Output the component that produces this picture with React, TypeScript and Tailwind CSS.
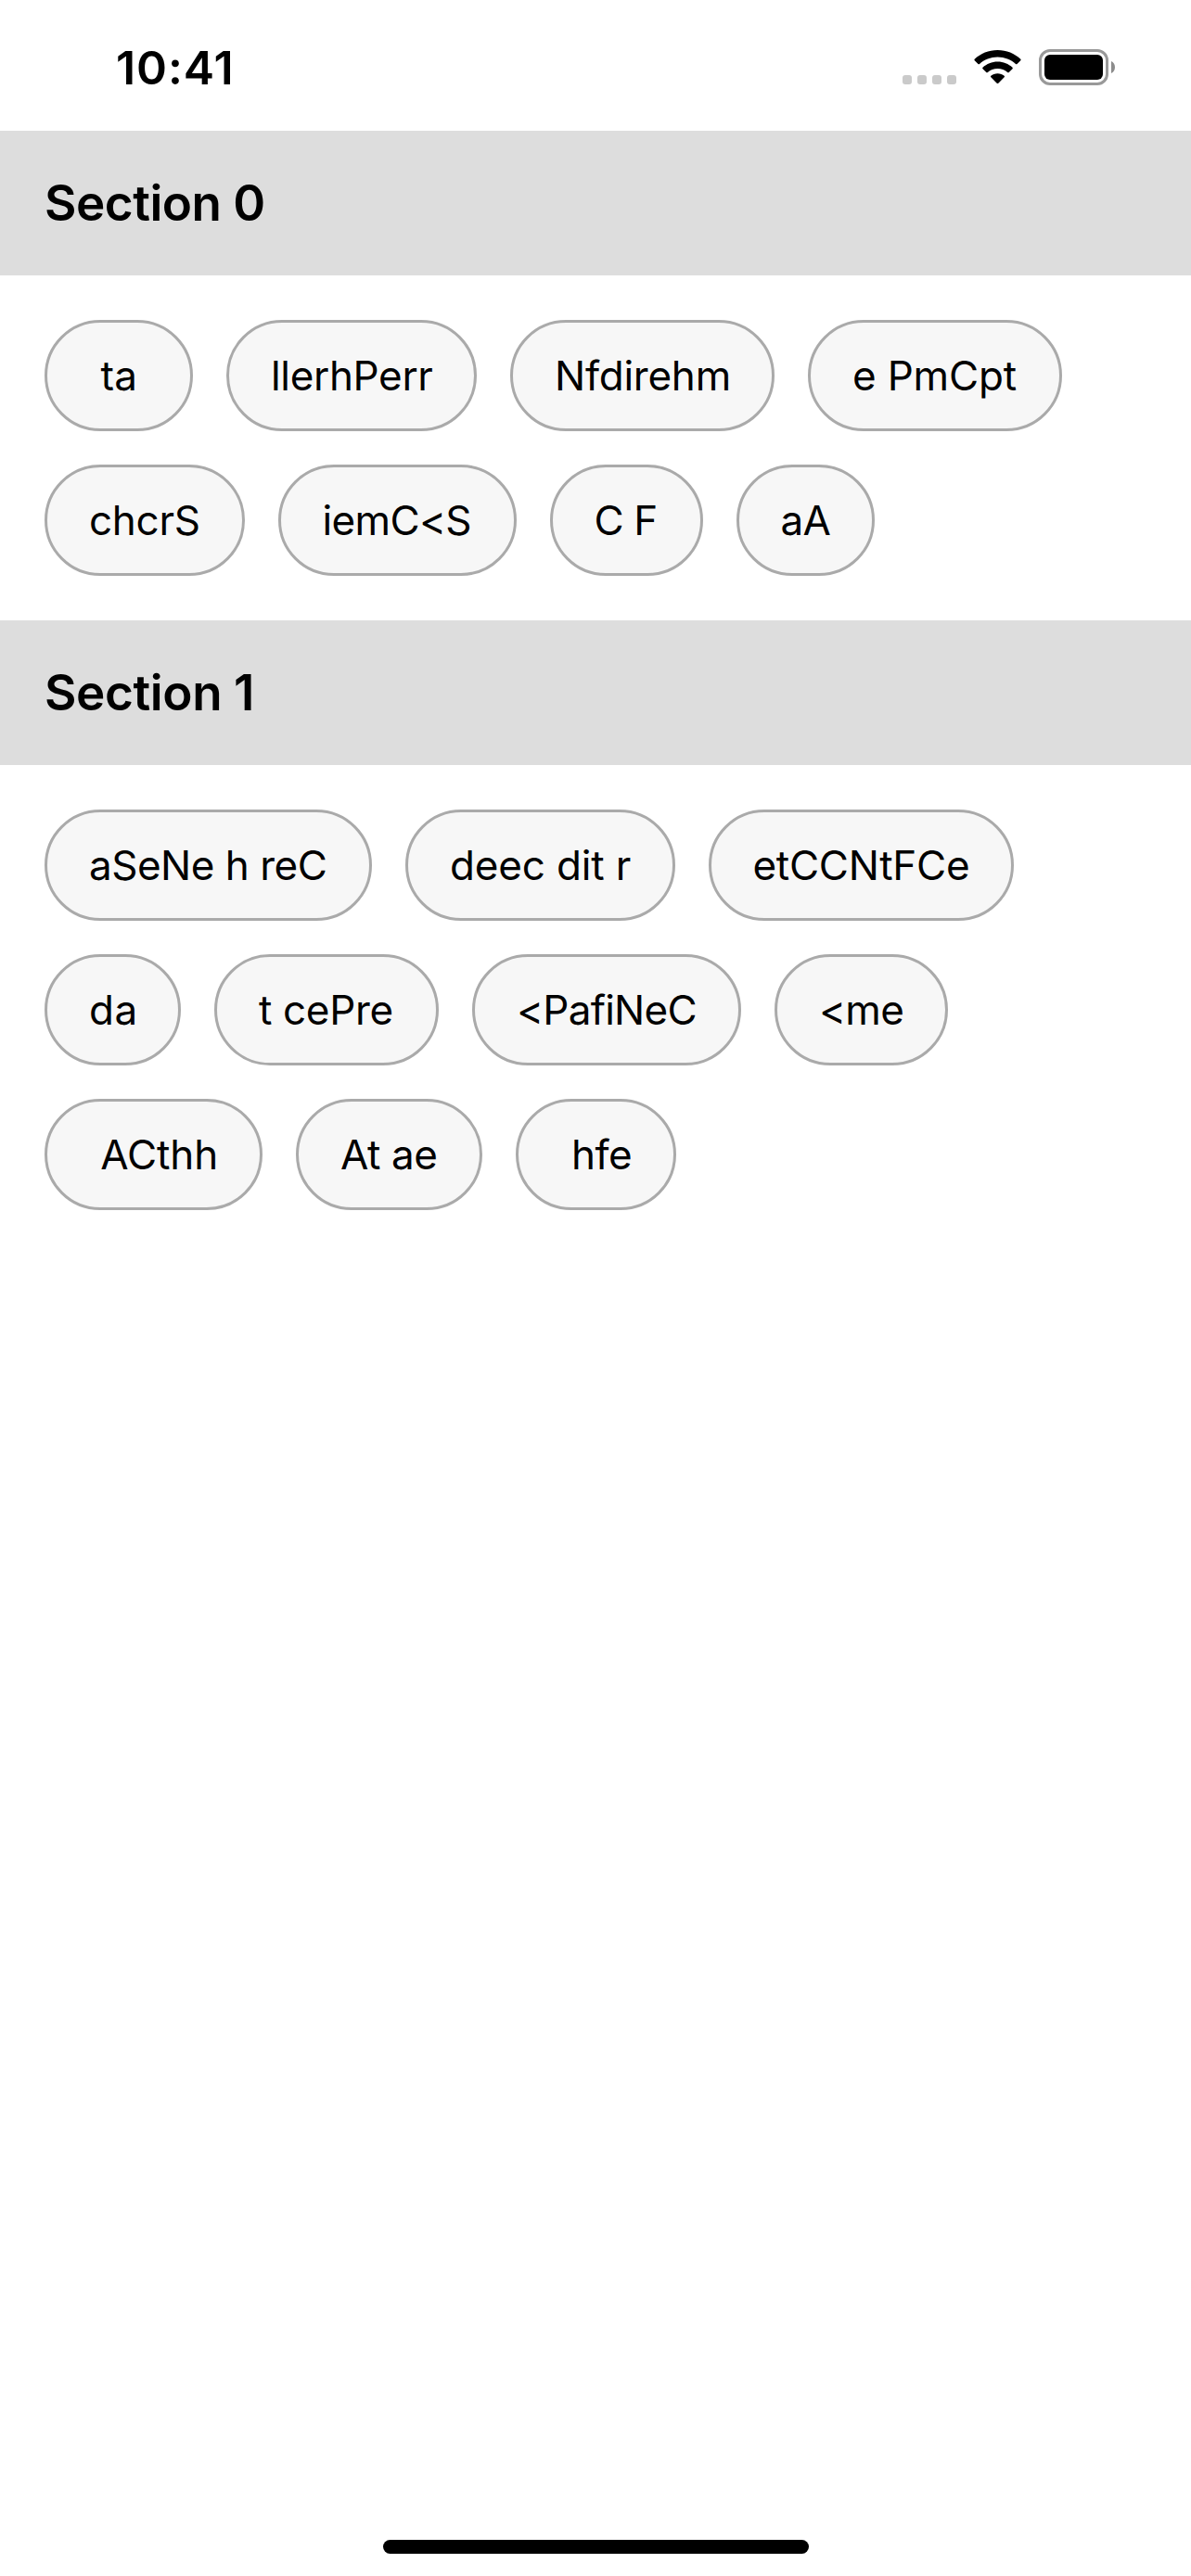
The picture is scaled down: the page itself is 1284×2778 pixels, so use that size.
type Chip = { label: string; box: string };

const sections: { title: string; tracking: string; rows: Chip[][] }[] = [
  {
    title: "Section 0",
    tracking: "tracking-[-0.5px]",
    rows: [
      [
        { label: " ta ", box: "w-[160px] tracking-[0.1px]" },
        { label: "llerhPerr", box: "w-[270px] tracking-[-0.33px]" },
        { label: "Nfdirehm", box: "w-[285px] tracking-[-0.23px]" },
        { label: "e PmCpt", box: "w-[274px] tracking-[-0.17px]" },
      ],
      [
        { label: "chcrS", box: "w-[215.5px] tracking-[-0.3px]" },
        { label: "iemC<S", box: "w-[257px] tracking-[-0.65px]" },
        { label: "C F", box: "w-[165px] tracking-[-0.86px]" },
        { label: "aA", box: "w-[149px] tracking-[-0.8px]" },
      ],
    ],
  },
  {
    title: "Section 1",
    tracking: "tracking-[-0.4px]",
    rows: [
      [
        { label: "aSeNe h reC", box: "w-[353px] tracking-[-0.5px]" },
        { label: "deec dit r", box: "w-[290.5px] tracking-[-0.15px]" },
        { label: "etCCNtFCe", box: "w-[329.5px] tracking-[-0.28px]" },
      ],
      [
        { label: "da", box: "w-[147px] tracking-[0.6px]" },
        { label: "t cePre", box: "w-[242px] tracking-[-0.35px]" },
        { label: "<PafiNeC", box: "w-[290px] tracking-[-0.75px]" },
        { label: "<me", box: "w-[187px] tracking-[-0.75px]" },
      ],
      [
        { label: " ACthh", box: "w-[235px] tracking-[-0.1px]" },
        { label: "At ae", box: "w-[201px] tracking-[-0.4px]" },
        { label: " hfe", box: "w-[173px] tracking-[-0.5px]" },
      ],
    ],
  },
];

function StatusBar() {
  return (
    <header className="flex h-[141px] shrink-0 items-start justify-between pr-[82px] pl-[125px]">
      <time className="mt-[43px] text-[50px] leading-[60px] font-semibold tracking-[0.9px]">10:41</time>
      <div className="mt-[53px] flex h-[39px] items-start">
        <div className="mt-7 flex gap-1.5">
          {[0, 1, 2, 3].map((dot) => (
            <span key={dot} className="size-2.5 rounded-[3px] bg-[#cacaca]" />
          ))}
        </div>
        <svg className="ml-[19px] h-[38px] w-[51px]" viewBox="0 0 51 38" fill="black">
          <path d="M25.500 1C15.900 1 7.200 4.700 .7 10.700Q0 11.500 .7 12.200L4.500 16Q5.200 16.700 6 16C11.100 11.300 18 8.500 25.500 8.500S39.900 11.300 45 16Q45.800 16.700 46.500 16L50.300 12.200Q51 11.500 50.300 10.700C43.800 4.700 35.100 1 25.500 1Z" />
          <path d="M25.500 13.500C19.300 13.500 13.700 15.900 9.500 19.700Q8.700 20.400 9.500 21.200L13.300 25Q14 25.700 14.800 25C17.600 22.500 21.400 21 25.500 21S33.400 22.500 36.200 25Q37 25.700 37.700 25L41.500 21.200Q42.300 20.400 41.500 19.700C37.300 15.900 31.700 13.500 25.500 13.500Z" />
          <path d="M25.500 26.200C22.700 26.200 20.200 27.200 18.300 28.800Q17.500 29.500 18.300 30.300L24.700 36.700Q25.500 37.500 26.300 36.700L32.700 30.300Q33.500 29.500 32.700 28.800C30.800 27.200 28.300 26.200 25.500 26.200Z" />
        </svg>
        <div className="ml-[19px] h-[39px] w-[75px] rounded-[12px] border-3 border-[#999] p-[3px]">
          <div className="h-full rounded-[6px] bg-black" />
        </div>
        <svg className="mt-[13px] ml-[3px] h-[13px] w-1" viewBox="0 0 4 13" fill="#8c8c8c">
          <path d="M0 0C2.400 1 4 3.500 4 6.500S2.400 12 0 13Z" />
        </svg>
      </div>
    </header>
  );
}

export default function App() {
  return (
    <div className="flex h-[2778px] w-[1284px] flex-col bg-white font-['Inter',sans-serif] text-black">
      <StatusBar />
      <main className="grow">
        {sections.map((section) => (
          <section key={section.title}>
            <h2
              className={`flex h-[156px] items-center bg-[#dddddd] px-12 text-[53px] leading-none font-semibold ${section.tracking}`}
            >
              {section.title}
            </h2>
            <div className="flex flex-col gap-9 p-12">
              {section.rows.map((row, i) => (
                <div key={i} className="flex gap-9">
                  {row.map((chip) => (
                    <div
                      key={chip.label}
                      className={`flex h-[120px] items-center rounded-full border-3 border-[#aaaaaa] bg-[#f7f7f7] pl-[45px] text-[44px] leading-none whitespace-pre ${chip.box}`}
                    >
                      {chip.label}
                    </div>
                  ))}
                </div>
              ))}
            </div>
          </section>
        ))}
      </main>
      <div className="mb-6 h-[15px] w-[459px] shrink-0 self-center rounded-full bg-black" />
    </div>
  );
}
